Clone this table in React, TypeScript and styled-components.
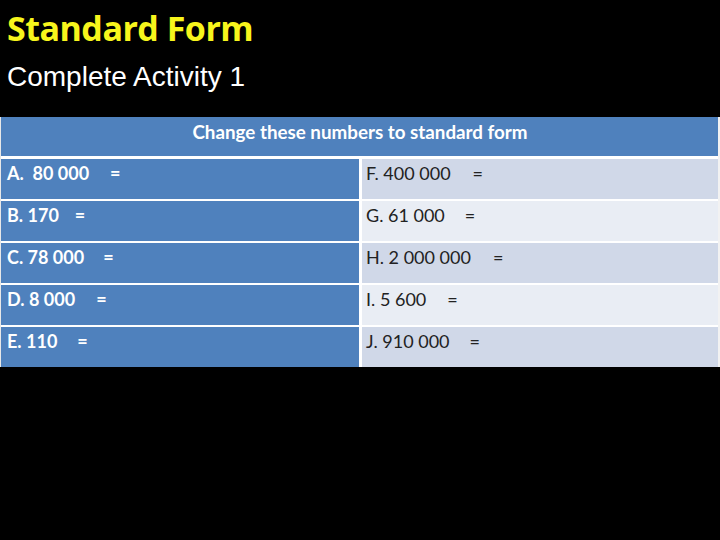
import React from "react";
import styled, { createGlobalStyle } from "styled-components";

const GlobalStyle = createGlobalStyle`
  html, body {
    margin: 0;
    padding: 0;
    background: #000;
  }
  body {
    width: 720px;
    height: 540px;
    overflow: hidden;
  }
`;

const Slide = styled.div`
  width: 720px;
  height: 540px;
  background: #000;
  display: flex;
  flex-direction: column;
`;

const Title = styled.h1`
  margin: 0;
  padding: 8px 0 0 7px;
  height: 54px;
  box-sizing: border-box;
  font-family: "Open Sans", "Noto Sans", sans-serif;
  font-weight: 700;
  font-size: 34px;
  line-height: 40px;
  letter-spacing: -0.5px;
  color: #f7f51c;
`;

const Subtitle = styled.div`
  padding: 7px 0 0 7px;
  height: 63px;
  box-sizing: border-box;
  font-family: "Liberation Sans", Arial, sans-serif;
  font-size: 28px;
  line-height: 32px;
  color: #fff;
`;

const Table = styled.div`
  display: grid;
  grid-template-columns: 358px 1fr;
  grid-auto-rows: 40px;
  row-gap: 2px;
  column-gap: 3px;
  background: #fff;
  border-right: 2px solid #f2f2f2;
  border-left: 1px solid #e8e8e8;
`;

const Header = styled.div`
  grid-column: 1 / 3;
  height: 39px;
  background: #4f81bd;
  color: #fff;
  font-family: Lato, "Open Sans", sans-serif;
  font-weight: 700;
  font-size: 18.8px;
  text-align: center;
  padding-top: 3px;
  padding-left: 1px;
  box-sizing: border-box;
  margin-bottom: 1px;
`;

const Cell = styled.div<{ $tone: "blue" | "dark" | "light" }>`
  background: ${(p) =>
    p.$tone === "blue" ? "#4f81bd" : p.$tone === "dark" ? "#d0d8e8" : "#e9edf4"};
  color: ${(p) => (p.$tone === "blue" ? "#fff" : "#222")};
  font-family: Lato, "Open Sans", sans-serif;
  font-weight: ${(p) => (p.$tone === "blue" ? 700 : 400)};
  font-size: 18px;
  padding: 3px 0 0 ${(p) => (p.$tone === "blue" ? 6 : 4)}px;
  box-sizing: border-box;
  white-space: nowrap;
`;

const Eq = styled.span<{ $at: number }>`
  display: inline-block;
  margin-left: ${(p) => p.$at}px;
`;

type Item = { label: string; gap: number };

const left: Item[] = [
  { label: "A.\u00a0 80 000", gap: 21 },
  { label: "B. 170", gap: 16 },
  { label: "C. 78 000", gap: 19 },
  { label: "D. 8 000", gap: 21 },
  { label: "E. 110", gap: 20 },
];

const right: Item[] = [
  { label: "F. 400 000", gap: 22 },
  { label: "G. 61 000", gap: 20 },
  { label: "H. 2 000 000", gap: 22 },
  { label: "I. 5 600", gap: 21 },
  { label: "J. 910 000", gap: 20 },
];

export default function App() {
  return (
    <>
      <GlobalStyle />
      <Slide>
        <Title>Standard Form</Title>
        <Subtitle>Complete Activity 1</Subtitle>
        <Table>
          <Header>Change these numbers to standard form</Header>
          {left.map((l, i) => (
            <React.Fragment key={l.label}>
              <Cell $tone="blue">
                {l.label}
                <Eq $at={l.gap}>=</Eq>
              </Cell>
              <Cell $tone={i % 2 === 0 ? "dark" : "light"}>
                {right[i].label}
                <Eq $at={right[i].gap}>=</Eq>
              </Cell>
            </React.Fragment>
          ))}
        </Table>
      </Slide>
    </>
  );
}
